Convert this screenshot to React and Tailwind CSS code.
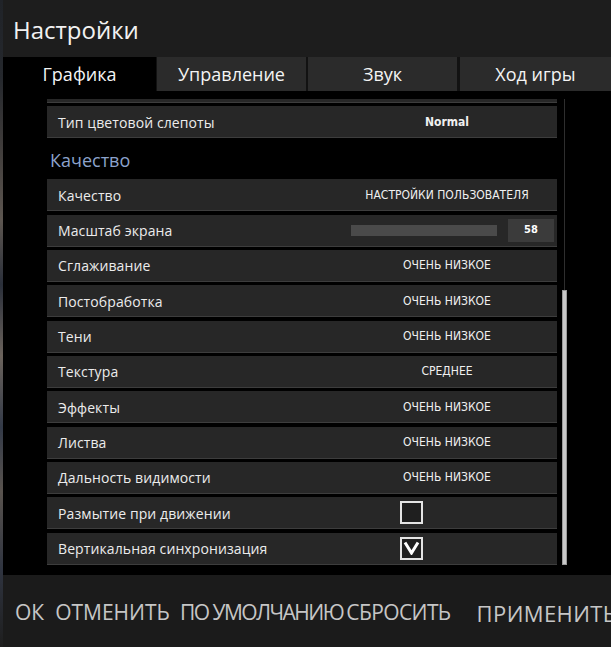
import React from "react";

const font = { fontFamily: '"Open Sans", "Noto Sans", sans-serif' };

const rows = [
  { label: "Качество", value: "НАСТРОЙКИ ПОЛЬЗОВАТЕЛЯ" },
  { label: "Масштаб экрана", slider: 58 },
  { label: "Сглаживание", value: "ОЧЕНЬ НИЗКОЕ" },
  { label: "Постобработка", value: "ОЧЕНЬ НИЗКОЕ" },
  { label: "Тени", value: "ОЧЕНЬ НИЗКОЕ" },
  { label: "Текстура", value: "СРЕДНЕЕ" },
  { label: "Эффекты", value: "ОЧЕНЬ НИЗКОЕ" },
  { label: "Листва", value: "ОЧЕНЬ НИЗКОЕ" },
  { label: "Дальность видимости", value: "ОЧЕНЬ НИЗКОЕ" },
  { label: "Размытие при движении", check: false },
  { label: "Вертикальная синхронизация", check: true },
];

const condensed = { fontFamily: '"DejaVu Sans Condensed", "DejaVu Sans", sans-serif' };

function Value({ children, bold }) {
  return (
    <div
      className={`w-[220px] text-center text-[12px] text-[#f0f0f0] font-stretch-condensed ${bold ? "font-bold" : ""}`}
      style={condensed}
    >
      {children}
    </div>
  );
}

function Row({ label, children }) {
  return (
    <div className="h-[32px] shrink-0 flex items-center bg-[#272727] border-b border-[#3d3d3d]">
      <div className="flex-1 pl-[11px] pt-[1px] text-[14px] text-[#ececec] tracking-[0.1px]">{label}</div>
      {children}
    </div>
  );
}

function CheckBox({ checked }) {
  return (
    <div className="w-[220px] pl-[63px] flex">
      <div className="w-[23px] h-[23px] border-2 border-[#e4e4e4] bg-[#1f1f1f] flex items-center justify-center">
        {checked && (
          <svg width="17" height="14" viewBox="0 0 17 14">
            <polyline points="2,1.5 8.5,12 15,1.5" fill="none" stroke="#ffffff" strokeWidth="3" strokeLinejoin="miter" />
          </svg>
        )}
      </div>
    </div>
  );
}

export default function App() {
  return (
    <div className="w-[611px] h-[647px] flex bg-black overflow-hidden" style={font}>
      <div className="w-[3px] shrink-0 bg-[linear-gradient(180deg,#202328_0%,#25282d_12%,#3e3b3a_22%,#5d5650_34%,#2a2f3a_44%,#6b635c_55%,#333a48_66%,#59534e_76%,#2f3440_88%,#1e1e1e_100%)]" />
      <div className="flex-1 flex flex-col min-w-0">
        <div className="h-[57px] shrink-0 bg-[#1d1d1d] flex items-center pl-[10px] pt-[3px]">
          <span className="text-[24px] text-[#f2f2f2] leading-none">Настройки</span>
        </div>
        <div className="h-[34px] shrink-0 flex bg-[#121212] text-[18px] text-[#f4f4f4]">
          <div className="w-[153px] bg-black flex items-center justify-center">Графика</div>
          <div className="w-[149px] ml-[1px] bg-[#2b2b2b] flex items-center justify-center">Управление</div>
          <div className="w-[149px] ml-[2px] bg-[#2b2b2b] flex items-center justify-center">Звук</div>
          <div className="flex-1 ml-[3px] bg-[#2b2b2b] flex items-center justify-center">Ход игры</div>
        </div>
        <div className="flex-1 flex bg-black pt-[8px] pl-[44px] min-h-0">
          <div className="w-[510px] flex flex-col gap-[3.33px] overflow-hidden">
            <div className="h-[32px] shrink-0 mt-[-28px] bg-[#272727] border-b border-[#3d3d3d]" />
            <Row label="Тип цветовой слепоты">
              <Value bold>Normal</Value>
            </Row>
            <div className="h-[34.3px] shrink-0 flex items-center pl-[3px] pt-[4px] text-[18px] text-[#8ca3cc]">Качество</div>
            {rows.map((r) => (
              <Row key={r.label} label={r.label}>
                {r.value && <Value>{r.value}</Value>}
                {r.slider !== undefined && (
                  <div className="flex items-center mr-[3px]">
                    <div className="w-[146px] h-[11px] bg-[#4a4a4a]" />
                    <div className="w-[46px] h-[23px] ml-[11px] bg-[#3b3b3b] flex items-center justify-center">
                      <span className="text-[11px] font-bold text-white font-stretch-condensed" style={condensed}>
                        {r.slider}
                      </span>
                    </div>
                  </div>
                )}
                {r.check !== undefined && <CheckBox checked={r.check} />}
              </Row>
            ))}
          </div>
          <div className="w-[6px] ml-[4px] flex flex-col items-center">
            <div className="w-px h-[191px] bg-[#2e2e2e]" />
            <div className="w-[5px] h-[275px] bg-[#c9c9c9] border border-[#9a9a9a]" />
          </div>
        </div>
        <div className="h-[72px] shrink-0 bg-[#1b1b1b] flex items-center whitespace-nowrap text-[21px] text-[#c6c6c6] pt-[4px]">
          <span className="ml-[12px]">ОК</span>
          <span className="ml-[11px]">ОТМЕНИТЬ</span>
          <span className="ml-[10px] tracking-[-1.5px]">ПО УМОЛЧАНИЮ</span>
          <span className="ml-[3px] tracking-[-0.6px]">СБРОСИТЬ</span>
          <span className="ml-[26px] text-[22px] tracking-[0.4px]">ПРИМЕНИТЬ</span>
        </div>
      </div>
    </div>
  );
}
